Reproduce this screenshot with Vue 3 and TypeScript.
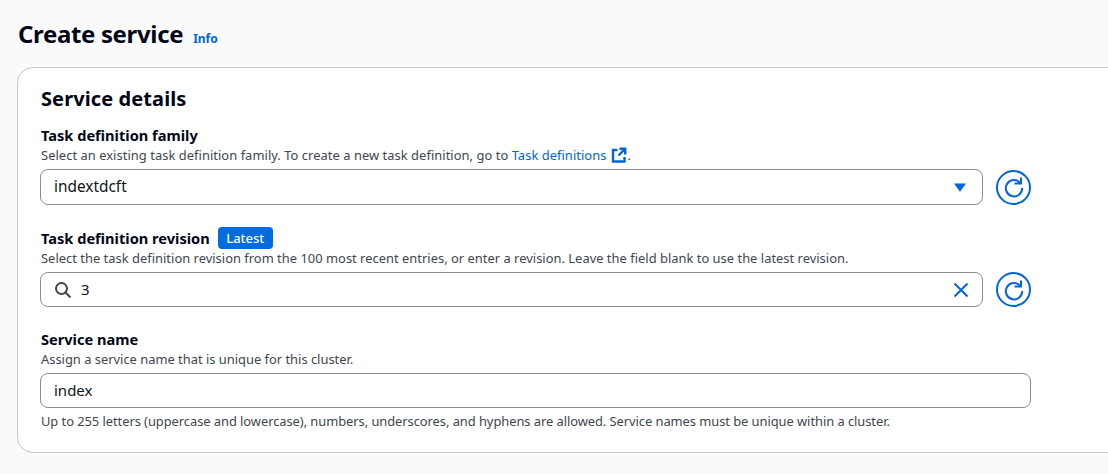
<script setup lang="ts">
const family = 'indextdcft'
const revision = '3'
const serviceName = 'index'
</script>
<template>
  <div class="page">
    <header class="head">
      <h1>Create service</h1>
      <a class="info">Info</a>
    </header>
    <section class="card">
      <h2>Service details</h2>

      <div class="field first">
        <div class="label">Task definition family</div>
        <div class="desc wide">
          Select an existing task definition family. To create a new task definition, go to
          <a class="link">Task definitions</a>
          <svg class="ext" width="16" height="16" viewBox="0 0 16 16" fill="none" stroke="#0066d9" stroke-width="2.4">
            <path d="M6.5 3H2v11.5h11.5V10" />
            <path d="M8.5 1.8h5.7v5.7" />
            <path d="M14 2L7.5 8.5" />
          </svg>.
        </div>
        <div class="row">
          <div class="control select">
            <span class="value">{{ family }}</span>
            <svg width="12" height="9" viewBox="0 0 12 9"><path d="M0 0.5h12L6 8.8z" fill="#0066d9" /></svg>
          </div>
          <button class="refresh">
            <svg width="24" height="24" viewBox="0 0 24 24" fill="none" stroke="#0066d9" stroke-width="2">
              <path d="M18.5 8.2A8.2 8.2 0 1 0 20.2 13" />
              <path d="M12.5 8.5h6.5V2.5" />
            </svg>
          </button>
        </div>
      </div>

      <div class="field second">
        <div class="label">
          Task definition revision
          <span class="badge">Latest</span>
        </div>
        <div class="desc long">Select the task definition revision from the 100 most recent entries, or enter a revision. Leave the field blank to use the latest revision.</div>
        <div class="row">
          <div class="control search">
            <svg width="18" height="18" viewBox="0 0 18 18" fill="none" stroke="#424650" stroke-width="2">
              <circle cx="7.5" cy="7.5" r="5.5" />
              <path d="M11.5 11.5L16.5 16.5" />
            </svg>
            <span class="value typed">{{ revision }}</span>
            <svg class="clear" width="16" height="16" viewBox="0 0 16 16" fill="none" stroke="#0066d9" stroke-width="2">
              <path d="M1.5 1.5l13 13M14.5 1.5l-13 13" />
            </svg>
          </div>
          <button class="refresh">
            <svg width="24" height="24" viewBox="0 0 24 24" fill="none" stroke="#0066d9" stroke-width="2">
              <path d="M18.5 8.2A8.2 8.2 0 1 0 20.2 13" />
              <path d="M12.5 8.5h6.5V2.5" />
            </svg>
          </button>
        </div>
      </div>

      <div class="field third">
        <div class="label">Service name</div>
        <div class="desc">Assign a service name that is unique for this cluster.</div>
        <div class="control name"><span class="value">{{ serviceName }}</span></div>
        <div class="desc hint">Up to 255 letters (uppercase and lowercase), numbers, underscores, and hyphens are allowed. Service names must be unique within a cluster.</div>
      </div>
    </section>
  </div>
</template>
<style>
html, body {
  margin: 0;
  background: #fafafa;
}
</style>
<style scoped>
.page {
  width: 1108px;
  height: 474px;
  overflow: hidden;
  box-sizing: border-box;
  padding: 16px 0 0 17px;
  font-family: "Noto Sans", "Open Sans", sans-serif;
  color: #000716;
  background: #fafafa;
}
.head {
  display: flex;
  align-items: baseline;
  gap: 10px;
  height: 51px;
  padding-left: 1px;
}
h1 {
  margin: 0;
  font-size: 24px;
  line-height: 36px;
  font-weight: 700;
  letter-spacing: -0.35px;
}
.info {
  font-size: 12px;
  font-weight: 700;
  color: #0066d9;
}
.card {
  width: 1120px;
  height: 386px;
  box-sizing: border-box;
  padding: 17px 0 0 22px;
  background: #fff;
  border: 1px solid #c6c6cd;
  border-radius: 16px;
}
h2 {
  margin: 0;
  padding-left: 1px;
  font-size: 20px;
  line-height: 28px;
  font-weight: 700;
  letter-spacing: 0.1px;
}
.field {
  width: 991px;
}
.first {
  margin-top: 12px;
}
.first .label,
.third .label {
  margin-bottom: 1px;
}
.second {
  margin-top: 22px;
}
.third {
  margin-top: 22px;
}
.label {
  display: flex;
  align-items: center;
  gap: 8px;
  padding-left: 1px;
  font-size: 14.6px;
  line-height: 20px;
  font-weight: 700;
}
.desc {
  padding-left: 1px;
  font-size: 12.9px;
  line-height: 18px;
  color: #424650;
  white-space: nowrap;
}
.wide {
  letter-spacing: 0.05px;
}
.long {
  letter-spacing: 0.02px;
}
.link {
  color: #0066d9;
}
.ext {
  margin-left: 5px;
  vertical-align: -3px;
}
.badge {
  padding: 0 8.5px;
  font-size: 13px;
  line-height: 22px;
  font-weight: 500;
  color: #fff;
  background: #006ce0;
  border-radius: 4px;
}
.row {
  display: flex;
  align-items: center;
  gap: 13px;
  margin-top: 5px;
}
.control {
  box-sizing: border-box;
  display: flex;
  align-items: center;
  font-size: 15px;
  color: #0f141a;
  background: #fff;
  border: 1px solid #8c8c94;
  border-radius: 8px;
}
.select {
  flex: 1;
  height: 36px;
  justify-content: space-between;
  padding: 0 16px 0 13px;
  font-size: 15.4px;
}
.search {
  flex: 1;
  height: 35px;
  padding: 0 13px;
}
.value {
  margin-bottom: 2px;
}
.typed {
  margin-left: 9px;
}
.clear {
  margin-left: auto;
}
.name {
  width: 991px;
  height: 35px;
  margin-top: 5px;
  padding: 0 13px;
}
.hint {
  margin-top: 4px;
  letter-spacing: -0.05px;
}
.refresh {
  flex: none;
  display: flex;
  align-items: center;
  justify-content: center;
  width: 35px;
  height: 35px;
  padding: 0;
  background: #fff;
  border: 2px solid #0066d9;
  border-radius: 50%;
}
</style>
